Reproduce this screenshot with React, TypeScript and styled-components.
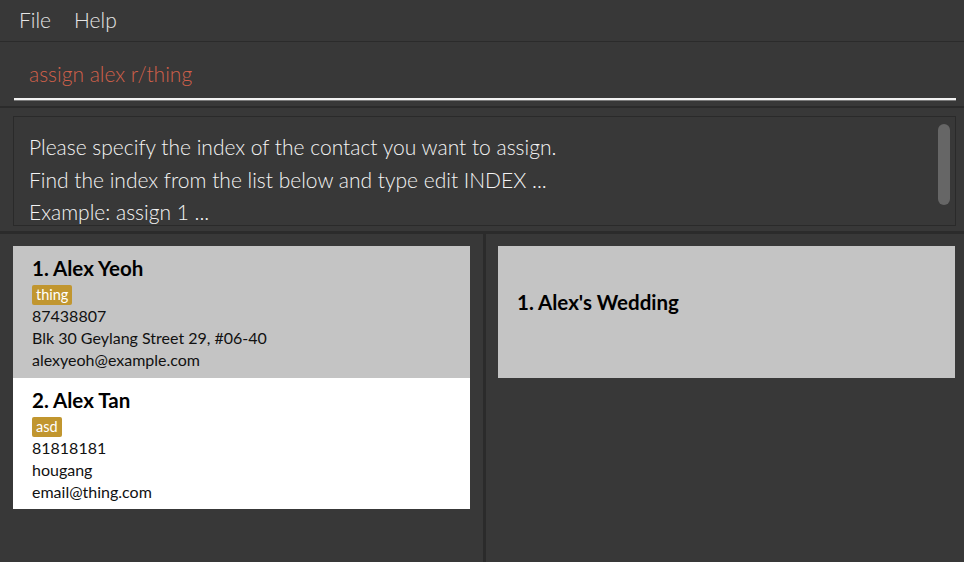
import React from "react";
import styled, { createGlobalStyle } from "styled-components";

const Global = createGlobalStyle`
  html, body { margin: 0; padding: 0; background: #383838; }
  body { width: 964px; height: 562px; overflow: hidden; font-family: "Lato", "Open Sans", sans-serif; }
  #root { height: 562px; }
`;

const Shell = styled.div`
  display: flex;
  flex-direction: column;
  height: 562px;
  background: #383838;
`;

const MenuBar = styled.div`
  display: flex;
  align-items: center;
  height: 42px;
  flex-shrink: 0;
  box-sizing: border-box;
  padding: 0 0 3px 19px;
  gap: 23px;
  border-bottom: 1px solid #2b2b2b;
`;

const MenuItem = styled.span`
  color: #e6e6e6;
  font-size: 21px;
  font-weight: 300;
`;

const CommandArea = styled.div`
  height: 64px;
  flex-shrink: 0;
  padding: 0 8px 0 14px;
  display: flex;
  align-items: flex-start;
  border-bottom: 2px solid #2b2b2b;
`;

const CommandInput = styled.div`
  flex: 1;
  margin-top: 20px;
  height: 36px;
  padding-left: 15px;
  display: flex;
  align-items: flex-start;
  color: #d0604a;
  font-size: 21px;
  font-weight: 300;
  line-height: 24px;
  border-bottom: 2px solid #f2f2f2;
  box-shadow: 0 1px 0 #7a7a7a;
`;

const ResultArea = styled.div`
  flex-shrink: 0;
  padding: 8px 8px 5px 13px;
  border-bottom: 3px solid #2b2b2b;
`;

const ResultBox = styled.div`
  position: relative;
  height: 110px;
  border: 1px solid #2a2a2a;
  padding: 14px 0 0 15px;
  overflow: hidden;
  box-sizing: border-box;
`;

const ResultLine = styled.div`
  color: #f4f4f4;
  font-size: 21px;
  font-weight: 300;
  line-height: 32.5px;
`;

const ScrollThumb = styled.div`
  position: absolute;
  right: 5px;
  top: 7px;
  width: 12px;
  height: 81px;
  border-radius: 6px;
  background: #666666;
`;

const Lower = styled.div`
  flex: 1;
  display: grid;
  grid-template-columns: 483px 3px 1fr;
`;

const Divider = styled.div`
  background: #2b2b2b;
`;

const ListPane = styled.div<{ $pad: string }>`
  padding: ${(p) => p.$pad};
  display: flex;
  flex-direction: column;
`;

const Card = styled.div<{ $bg: string; $h: number }>`
  background: ${(p) => p.$bg};
  height: ${(p) => p.$h}px;
  flex-shrink: 0;
  box-sizing: border-box;
  padding: 9px 0 0 19px;
  display: flex;
  flex-direction: column;
  align-items: flex-start;
`;

const Name = styled.div`
  font-size: 20.5px;
  font-weight: 700;
  color: #000;
  line-height: 26px;
`;

const Tag = styled.div`
  margin-top: 4px;
  background: #c1962f;
  color: #fff;
  font-size: 14.5px;
  line-height: 20px;
  height: 20px;
  padding: 0 4px;
  border-radius: 2px;
`;

const Info = styled.div`
  font-size: 16px;
  color: #111;
  line-height: 22px;
`;

const EventCard = styled.div`
  background: #c4c4c4;
  height: 132px;
  flex-shrink: 0;
  box-sizing: border-box;
  padding: 43px 0 0 19px;
  font-size: 20.5px;
  line-height: 26px;
  font-weight: 700;
  color: #000;
`;

const people = [
  { n: "1. Alex Yeoh", tag: "thing", phone: "87438807", addr: "Blk 30 Geylang Street 29, #06-40", email: "alexyeoh@example.com", bg: "#c4c4c4" },
  { n: "2. Alex Tan", tag: "asd", phone: "81818181", addr: "hougang", email: "email@thing.com", bg: "#ffffff" },
];

export default function App() {
  return (
    <Shell>
      <Global />
      <MenuBar>
        <MenuItem>File</MenuItem>
        <MenuItem>Help</MenuItem>
      </MenuBar>
      <CommandArea>
        <CommandInput>assign alex r/thing</CommandInput>
      </CommandArea>
      <ResultArea>
        <ResultBox>
          <ResultLine>Please specify the index of the contact you want to assign.</ResultLine>
          <ResultLine>Find the index from the list below and type edit INDEX ...</ResultLine>
          <ResultLine>Example: assign 1 ...</ResultLine>
          <ScrollThumb />
        </ResultBox>
      </ResultArea>
      <Lower>
        <ListPane $pad="12px 13px 0 13px">
          {people.map((p) => (
            <Card key={p.n} $bg={p.bg} $h={p.bg === "#ffffff" ? 131 : 132}>
              <Name>{p.n}</Name>
              <Tag>{p.tag}</Tag>
              <Info>{p.phone}</Info>
              <Info>{p.addr}</Info>
              <Info>{p.email}</Info>
            </Card>
          ))}
        </ListPane>
        <Divider />
        <ListPane $pad="12px 9px 0 12px">
          <EventCard>1. Alex's Wedding</EventCard>
        </ListPane>
      </Lower>
    </Shell>
  );
}
